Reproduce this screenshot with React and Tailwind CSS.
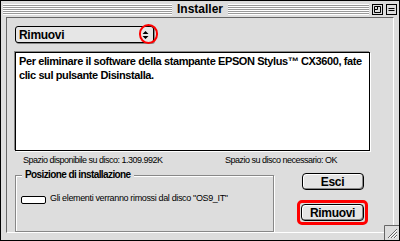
import React from "react";

const stripes =
  "bg-[repeating-linear-gradient(to_bottom,#ffffff_0px,#ffffff_1px,#999999_1px,#999999_2px)]";

const TitleBar = () => (
  <div className="h-[16px] flex items-center pl-[2px] pr-[2px]">
    <div className={`flex-1 h-[11px] ${stripes}`} />
    <div className="px-[5px] text-[12px] font-bold leading-none text-black">Installer</div>
    <div className="flex-1 flex items-center gap-[3px]">
      <div className={`flex-1 h-[11px] ${stripes}`} />
      {/* collapse / zoom boxes */}
      <svg width="11" height="11" viewBox="0 0 11 11">
        <rect x="0.5" y="0.5" width="10" height="10" fill="#dddddd" stroke="#000" />
        <path d="M2.5 2.5 H8.5 V8.5 H2.5 Z M2.5 5.5 H5.5 V2.5" fill="none" stroke="#000" />
      </svg>
      <svg width="11" height="11" viewBox="0 0 11 11">
        <rect x="0.5" y="0.5" width="10" height="10" fill="#dddddd" stroke="#000" />
        <path d="M2.5 4.5 H8.5 M2.5 6.5 H8.5" fill="none" stroke="#000" />
      </svg>
    </div>
  </div>
);

const MacButton = ({ label, className = "" }) => (
  <div
    className={`h-[17px] rounded-[4px] border border-black bg-[#e4e4e4] flex items-center justify-center text-[12px] font-bold leading-none tracking-[-0.3px] shadow-[inset_-1px_-1px_0_#888,inset_1px_1px_0_#fff] ${className}`}
  >
    {label}
  </div>
);

export default function App() {
  return (
    <div className="w-[400px] h-[241px] bg-[#dddddd] border border-black flex flex-col text-black font-['Liberation_Sans',sans-serif] overflow-hidden">
      <TitleBar />
      <div className="flex-1 px-[5px] pb-[7px] relative">
        <div className="h-full border border-t-[#666] border-l-[#666] border-r-white border-b-white bg-[#dddddd] pl-[8px] pr-[24px] pt-[8px] flex flex-col">
          {/* popup menu */}
          <div className="relative w-[139px] h-[17px] rounded-[3px] border border-black bg-[#e6e6e6] shadow-[1px_1px_0_#888] flex items-center pl-[3px]">
            <span className="text-[12px] font-bold leading-none tracking-[-0.3px]">Rimuovi</span>
            <svg className="absolute right-[4px] top-[3px]" width="7" height="10" viewBox="0 0 7 10">
              <path d="M3.5 1 L6.5 4 H0.5 Z M3.5 9 L6.5 6 H0.5 Z" fill="#000" />
            </svg>
            <div className="absolute right-[-5px] top-[-3px] w-[19px] h-[20px] rounded-full border-2 border-[#ff0000]" />
          </div>

          {/* message box */}
          <div className="mt-[9px] w-[355px] h-[99px] bg-white border border-black shadow-[-1px_-1px_0_#888,1px_1px_0_#fff] px-[3px] pt-[1px]">
            <p className="text-[11px] font-bold leading-[14px] tracking-[-0.4px]">
              Per eliminare il software della stampante EPSON Stylus™ CX3600, fate clic sul pulsante Disinstalla.
            </p>
          </div>

          {/* status row */}
          <div className="flex justify-between mt-[3px] pl-[8px] pr-[32px] text-[9px] leading-[12px] tracking-[-0.5px]">
            <span>Spazio disponibile su disco: 1.309.992K</span>
            <span>Spazio su disco necessario: OK</span>
          </div>

          {/* bottom area */}
          <div className="flex mt-[3px]">
            <div className="relative w-[259px] h-[57px] mt-[6px] border border-[#888] shadow-[inset_1px_1px_0_#fff,1px_1px_0_#fff]">
              <div className="absolute left-[6px] top-[-8px] bg-[#dddddd] px-[3px] text-[10px] font-bold leading-[14px] tracking-[-0.6px]">
                Posizione di installazione
              </div>
              <div className="flex items-center mt-[20px] ml-[5px] gap-[4px]">
                <div className="w-[25px] h-[8px] border border-black rounded-[2px] bg-white" />
                <span className="text-[9px] leading-[10px] -mt-[5px] tracking-[-0.35px]">
                  Gli elementi verranno rimossi dal disco "OS9_IT"
                </span>
              </div>
            </div>
            <div className="flex flex-col items-center ml-[23px] mt-[4px] gap-[10px]">
              <MacButton label="Esci" className="w-[62px]" />
              <div className="rounded-[5px] border-[3px] border-[#ff0000] p-[1px]">
                <MacButton label="Rimuovi" className="w-[63px] h-[15px]" />
              </div>
            </div>
          </div>
        </div>
        {/* grow box */}
        <svg className="absolute right-[0px] bottom-[0px]" width="15" height="15" viewBox="0 0 15 15">
          <rect x="0" y="0" width="15" height="15" fill="#dddddd" />
          <path d="M0.5 15 V0.5 H15" fill="none" stroke="#666" />
          <path d="M4 13 L13 4 M7 13 L13 7 M10 13 L13 10" stroke="#666" />
          <path d="M5 13 L13 5 M8 13 L13 8 M11 13 L13 11" stroke="#fff" />
        </svg>
      </div>
    </div>
  );
}
